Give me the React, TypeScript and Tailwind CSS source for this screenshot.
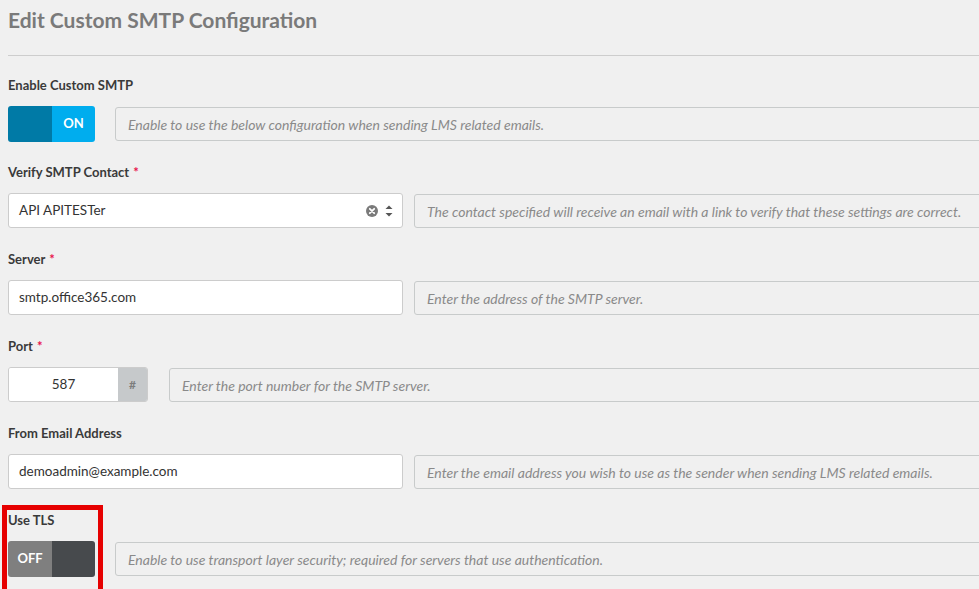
import type { ReactNode } from 'react';

const font = { fontFamily: 'Lato, "Open Sans", "Liberation Sans", sans-serif' };

const Label = ({ children, required }: { children: ReactNode; required?: boolean }) => (
  <div className="h-[18px] leading-[18px] text-[13px] font-bold text-[#3a3a3a] mb-3">
    {children}
    {required && <span className="text-[#e8114b] ml-1">*</span>}
  </div>
);

const Help = ({ children }: { children: ReactNode }) => (
  <div className="flex-1 -mr-4 mt-px h-[34px] flex items-center pl-3 rounded-[3px] border border-[#c8cbcb] text-[14px] italic text-[#8a8a8a] whitespace-nowrap overflow-hidden">
    {children}
  </div>
);

const Toggle = ({ on }: { on: boolean }) => (
  <div className="flex w-[87px] h-9 rounded-[3px] overflow-hidden text-[13px] font-bold text-white">
    {on ? (
      <>
        <div className="w-11 bg-[#007aa6]" />
        <div className="flex-1 bg-[#00adee] flex items-center justify-center">ON</div>
      </>
    ) : (
      <>
        <div className="w-11 bg-[#7f7f7f] flex items-center justify-center">OFF</div>
        <div className="flex-1 bg-[#474a4d]" />
      </>
    )}
  </div>
);

const TextInput = ({ value, children }: { value: string; children?: ReactNode }) => (
  <div className="w-[395px] h-[35px] bg-white border border-[#cccccc] rounded-[3px] flex items-center pl-[10px] pr-2 text-[13.5px] text-[#333]">
    <span className="flex-1">{value}</span>
    {children}
  </div>
);

const Field = ({ children }: { children: ReactNode }) => <div className="pb-[21px]">{children}</div>;

export default function App() {
  return (
    <div className="relative w-[979px] h-[589px] overflow-hidden bg-[#f0f0f0]" style={font}>
      <div className="pl-2">
        <h1 className="pt-[6px] h-[34px] leading-7 text-[21px] font-bold text-[#7a7a7a]">Edit Custom SMTP Configuration</h1>
        <div className="mt-[21px] mb-5 border-t border-[#cdcdcd]" />

        <Field>
          <Label>Enable Custom SMTP</Label>
          <div className="flex items-start h-9 gap-5">
            <Toggle on />
            <Help>Enable to use the below configuration when sending LMS related emails.</Help>
          </div>
        </Field>

        <Field>
          <Label required>Verify SMTP Contact</Label>
          <div className="flex items-start h-9 gap-[11px]">
            <TextInput value="API APITESTer">
              <svg width="12" height="12" viewBox="0 0 12 12" className="mr-[6px]">
                <circle cx="6" cy="6" r="6" fill="#7a7a7a" />
                <path d="M3.8 3.8 8.2 8.2M8.2 3.8 3.8 8.2" stroke="#fff" strokeWidth="1.8" strokeLinecap="round" />
              </svg>
              <svg width="10" height="16" viewBox="0 0 10 16">
                <path d="M1.5 6 5 2.5 8.5 6Z" fill="#555" />
                <path d="M1.5 10 5 13.5 8.5 10Z" fill="#555" />
              </svg>
            </TextInput>
            <Help>The contact specified will receive an email with a link to verify that these settings are correct.</Help>
          </div>
        </Field>

        <Field>
          <Label required>Server</Label>
          <div className="flex items-start h-9 gap-[11px]">
            <TextInput value="smtp.office365.com" />
            <Help>Enter the address of the SMTP server.</Help>
          </div>
        </Field>

        <Field>
          <Label required>Port</Label>
          <div className="flex items-start h-9 gap-[21px]">
            <div className="flex w-[140px] h-[35px] rounded-[3px] overflow-hidden border border-[#cccccc]">
              <div className="w-[109px] bg-white flex items-center justify-center text-[13.5px] text-[#333]">587</div>
              <div className="flex-1 bg-[#c6c9cb] flex items-center justify-center text-[12px] font-bold text-[#7d7d7d]">#</div>
            </div>
            <Help>Enter the port number for the SMTP server.</Help>
          </div>
        </Field>

        <Field>
          <Label>From Email Address</Label>
          <div className="flex items-start h-9 gap-[11px]">
            <TextInput value="demoadmin@example.com" />
            <Help>Enter the email address you wish to use as the sender when sending LMS related emails.</Help>
          </div>
        </Field>

        <Field>
          <Label>Use TLS</Label>
          <div className="flex items-start h-9 gap-5">
            <Toggle on={false} />
            <Help>Enable to use transport layer security; required for servers that use authentication.</Help>
          </div>
        </Field>
      </div>

      <div className="absolute left-[2px] top-[505px] w-[101px] h-[100px] border-[5px] border-[#e60000]" />
    </div>
  );
}
